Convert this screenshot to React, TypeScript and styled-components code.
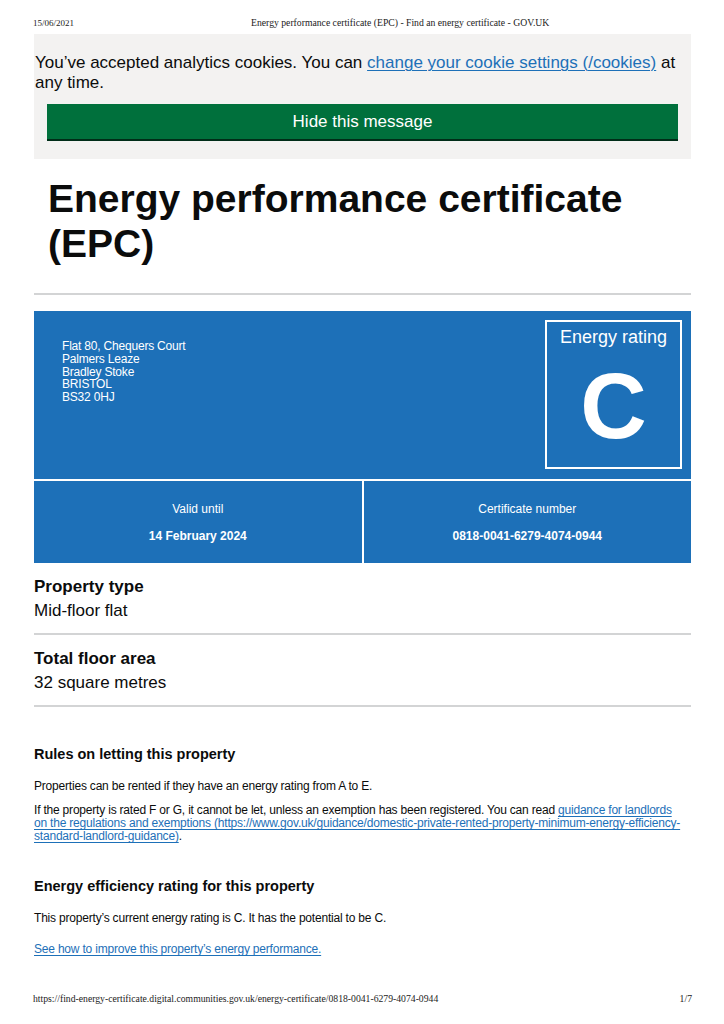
import * as React from "react";
import styled, { createGlobalStyle } from "styled-components";

const GlobalStyle = createGlobalStyle`
  html, body {
    margin: 0;
    padding: 0;
    background: #ffffff;
  }
  body {
    font-family: "Liberation Sans", Arial, sans-serif;
    color: #0b0c0c;
  }
`;

const Page = styled.div`
  width: 724px;
  min-height: 1024px;
  display: flex;
  flex-direction: column;
  box-sizing: border-box;
`;

const PrintBar = styled.div`
  display: flex;
  align-items: center;
  padding: 0 32px 0 33px;
  font-family: "Liberation Serif", "Times New Roman", serif;
  font-size: 9px;
  line-height: 10px;
  color: #222;
`;

const PrintHeader = styled(PrintBar)`
  height: 34px;
  box-sizing: border-box;
  padding-top: 12px;
  gap: 177px;
`;

const PrintTitle = styled.span`
  font-size: 9.7px;
`;

const PrintFooter = styled(PrintBar)`
  margin-top: auto;
  height: 30px;
  align-items: flex-start;
  justify-content: space-between;
  font-size: 9.7px;
`;

const Main = styled.main`
  margin: 0 33px 0 34px;
`;

const CookieBanner = styled.div`
  background: #f3f2f1;
  padding: 19px 0 20px 1px;
`;

const CookieText = styled.p`
  margin: 0 12px 0 0;
  font-size: 17px;
  line-height: 20px;
`;

const Link = styled.a`
  color: #1d70b8;
  text-decoration: underline;
  text-decoration-thickness: 1px;
  text-underline-offset: 2px;
`;

const HideButton = styled.button`
  display: block;
  width: 631px;
  height: 35px;
  margin: 11px 0 0 12px;
  border: 0;
  background: #00703c;
  box-shadow: 0 2px 0 #002d18;
  color: #ffffff;
  font-family: "Liberation Sans", Arial, sans-serif;
  font-size: 17px;
  padding: 0;
`;

const Title = styled.h1`
  margin: 0;
  padding: 17px 0 0 14px;
  font-size: 39px;
  line-height: 45px;
  font-weight: 700;
  color: #0b0c0c;
`;

const Rule = styled.hr<{ $gap?: number }>`
  border: 0;
  border-top: 2px solid #d3d4d5;
  margin: ${(p) => p.$gap ?? 22}px 0 0;
`;

const Certificate = styled.section`
  margin-top: 16px;
  display: grid;
  grid-template-columns: 1fr 1fr;
  grid-template-rows: 168px 82px;
  gap: 2px;
  background: #ffffff;
`;

const Summary = styled.div`
  grid-column: 1 / 3;
  background: #1d70b8;
  display: flex;
  justify-content: space-between;
  padding: 9px 9px 9px 28px;
`;

const Address = styled.p`
  margin: 20px 0 0;
  color: #ffffff;
  font-size: 12px;
  line-height: 12.75px;
  letter-spacing: -0.2px;
`;

const RatingBox = styled.div`
  width: 133px;
  height: 145px;
  border: 2px solid #ffffff;
  display: flex;
  flex-direction: column;
  align-items: center;
  color: #ffffff;
`;

const RatingLabel = styled.div`
  margin-top: 4px;
  font-size: 18px;
  line-height: 22px;
`;

const RatingLetter = styled.div`
  margin-top: 12px;
  font-size: 92px;
  line-height: 92px;
  font-weight: 700;
`;

const Cell = styled.div`
  background: #1d70b8;
  color: #ffffff;
  display: flex;
  flex-direction: column;
  align-items: center;
  padding-top: 21px;
  font-size: 12px;
  line-height: 14px;
`;

const CellValue = styled.strong`
  margin-top: 13px;
  font-weight: 700;
`;

const SummaryList = styled.dl`
  margin: 0;
`;

const SummaryRow = styled.div`
  padding-top: 14px;
`;

const SummaryKey = styled.dt`
  font-size: 17px;
  line-height: 20px;
  font-weight: 700;
`;

const SummaryValue = styled.dd`
  margin: 4px 0 0;
  font-size: 17px;
  line-height: 20px;
`;

const SectionHeading = styled.h2<{ $top: number }>`
  margin: ${(p) => p.$top}px 0 0;
  font-size: 14.5px;
  line-height: 18px;
  font-weight: 700;
`;

const Para = styled.p<{ $top: number }>`
  margin: ${(p) => p.$top}px 0 0;
  max-width: 653px;
  font-size: 12px;
  line-height: 13px;
  letter-spacing: -0.2px;
`;

export default function App() {
  return (
    <Page>
      <GlobalStyle />
      <PrintHeader>
        <span>15/06/2021</span>
        <PrintTitle>Energy performance certificate (EPC) - Find an energy certificate - GOV.UK</PrintTitle>
      </PrintHeader>
      <Main>
        <CookieBanner>
          <CookieText>
            You’ve accepted analytics cookies. You can{" "}
            <Link href="#">change your cookie settings (/cookies)</Link> at any time.
          </CookieText>
          <HideButton>Hide this message</HideButton>
        </CookieBanner>

        <Title>
          Energy performance certificate
          <br />
          (EPC)
        </Title>
        <Rule $gap={27} />

        <Certificate>
          <Summary>
            <Address>
              Flat 80, Chequers Court
              <br />
              Palmers Leaze
              <br />
              Bradley Stoke
              <br />
              BRISTOL
              <br />
              BS32 0HJ
            </Address>
            <RatingBox>
              <RatingLabel>Energy rating</RatingLabel>
              <RatingLetter>C</RatingLetter>
            </RatingBox>
          </Summary>
          <Cell>
            Valid until
            <CellValue>14 February 2024</CellValue>
          </Cell>
          <Cell>
            Certificate number
            <CellValue>0818-0041-6279-4074-0944</CellValue>
          </Cell>
        </Certificate>

        <SummaryList>
          <SummaryRow>
            <SummaryKey>Property type</SummaryKey>
            <SummaryValue>Mid-floor flat</SummaryValue>
            <Rule $gap={12} />
          </SummaryRow>
          <SummaryRow>
            <SummaryKey>Total floor area</SummaryKey>
            <SummaryValue>32 square metres</SummaryValue>
            <Rule $gap={12} />
          </SummaryRow>
        </SummaryList>

        <SectionHeading $top={38}>Rules on letting this property</SectionHeading>
        <Para $top={17}>Properties can be rented if they have an energy rating from A to E.</Para>
        <Para $top={11}>
          If the property is rated F or G, it cannot be let, unless an exemption has been registered. You
          can read{" "}
          <Link href="#">
            guidance for landlords on the regulations and exemptions
            (https://www.gov.uk/guidance/domestic-private-rented-property-minimum-energy-efficiency-standard-landlord-guidance)
          </Link>
          .
        </Para>

        <SectionHeading $top={34}>Energy efficiency rating for this property</SectionHeading>
        <Para $top={17}>This property’s current energy rating is C. It has the potential to be C.</Para>
        <Para $top={18}>
          <Link href="#">See how to improve this property’s energy performance.</Link>
        </Para>
      </Main>
      <PrintFooter>
        <span>https://find-energy-certificate.digital.communities.gov.uk/energy-certificate/0818-0041-6279-4074-0944</span>
        <span>1/7</span>
      </PrintFooter>
    </Page>
  );
}
